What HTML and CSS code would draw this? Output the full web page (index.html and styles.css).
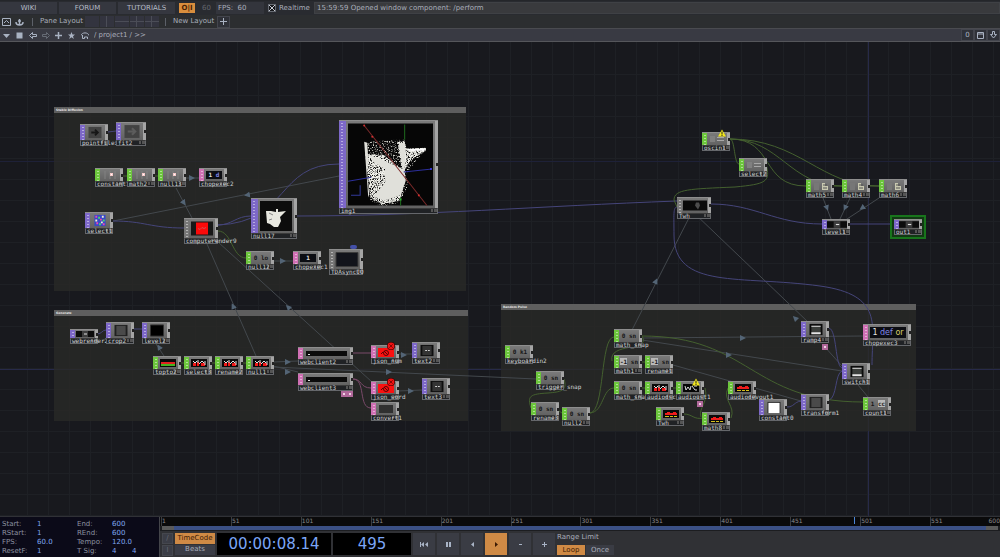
FILE: index.html
```html
<!DOCTYPE html>
<html lang="en">
<head>
<meta charset="utf-8">
<title>/project1</title>
<link rel="stylesheet" href="styles.css">
</head>
<body>
<svg class="defs" aria-hidden="true">
  <defs>
    <filter id="grain" x="0" y="0" width="1" height="1">
      <feTurbulence type="fractalNoise" baseFrequency="0.9" numOctaves="2" seed="4"/>
      <feColorMatrix values="0 0 0 0 0  0 0 0 0 0  0 0 0 0 0  0 5 0 0 -1.7"/>
      <feComposite in="SourceGraphic" operator="in"/>
    </filter>
    <filter id="dust" x="0" y="0" width="1" height="1">
      <feTurbulence type="fractalNoise" baseFrequency="0.8" numOctaves="2" seed="9"/>
      <feColorMatrix values="0 0 0 0 0  0 0 0 0 0  0 0 0 0 0  0 4 0 0 -2"/>
      <feComposite in="SourceGraphic" operator="in"/>
    </filter>
  </defs>
  <symbol id="t-plot" viewBox="0 0 18 10"><path d="M4 1v8M9 1v8M14 1v8" stroke="#828282" fill="none"/><path d="M9 3h3v3H9z" fill="#f5c9c9"/><path d="M10 4h1v1h-1z" fill="#fff"/></symbol>
  <symbol id="t-lines" viewBox="0 0 18 10"><path d="M2 2h5v6H2z" fill="#808080"/><path d="M9 3.5h7M9 6.5h7" stroke="#a8a8a8"/></symbol>
  <symbol id="t-cols" viewBox="0 0 18 10"><path d="M2 2h5v7H2z" fill="#777"/><path d="M10 2h3v3h3v4h-6z" fill="#c9c9b0"/><path d="M11 4h4M11 7h4" stroke="#555"/></symbol>
  <symbol id="t-words" viewBox="0 0 18 10"><path d="M1 1h16v8H1z" fill="#0a0a0a"/><path d="M3 5h3v3H3zM7 4h2v4H7zM11 5h4v3h-4z" fill="#f01818"/><path d="M3 3l2 2 2-2M8 2v3M9 6l3-3M12 3l2 2M15 3v4" stroke="#e0e0e0" fill="none"/></symbol>
  <symbol id="t-bars" viewBox="0 0 18 10"><path d="M1 1h16v8H1z" fill="#0a0a0a"/><path d="M3 4h2V3h3v1h3V3h3v1h1v2H3z" fill="#ee1c1c"/><path d="M3 7.5h4m1 0h3m1 0h3" stroke="#d8c01c"/></symbol>
  <symbol id="t-slab" viewBox="0 0 18 10"><path d="M1 1h16v8H1z" fill="#080808"/><path d="M2 5h14" stroke="#e02020" stroke-width="2"/><path d="M2 7h14" stroke="#45b020" stroke-width="2"/></symbol>
  <symbol id="t-fail" viewBox="0 0 18 10"><path d="M1 1h16v9H1z" fill="#fb1010"/><circle cx="9" cy="6" r="2.500" fill="none" stroke="#5a0505"/><path d="M7 4l4 4M4 7l2-2" fill="none" stroke="#5a0505"/></symbol>
  <symbol id="t-wide" viewBox="0 0 18 8"><path d="M0 1h18v6H0z" fill="#0c0c0c"/><path d="M6 1h6v6H6z" fill="#3e3e3e"/><path d="M8 4h3" stroke="#ddd"/></symbol>
  <symbol id="t-frame" viewBox="0 0 18 14"><path d="M2 1h14v12H2z" fill="#202020"/><path d="M4 2h10v10H4z" fill="#4a4a4a"/></symbol>
  <symbol id="t-text" viewBox="0 0 18 14"><path d="M2 1h14v12H2z" fill="#0e0e0e"/><path d="M4 2h10v10H4z" fill="#343434"/><path d="M7 7h2m1 0h2" stroke="#ddd"/></symbol>
  <symbol id="t-black" viewBox="0 0 18 14"><path d="M2 1h14v12H2z" fill="#000" stroke="#333"/></symbol>
  <symbol id="t-slot" viewBox="0 0 18 14"><path d="M2 1h14v12H2z" fill="#0b0b0b"/><path d="M4 3h10v9H4z" fill="#3c3f3c"/><path d="M4 3h10v1H4zM4 10h10v2H4z" fill="#e4e4e4"/></symbol>
  <symbol id="t-white" viewBox="0 0 18 14"><path d="M2 1h14v12H2z" fill="#252525"/><path d="M3 2h12v11H3z" fill="#fff"/></symbol>
  <symbol id="t-arrow" viewBox="0 0 18 14"><path d="M2 1h14v12H2z" fill="#424242"/><path d="M5 7h7M9 4l3 3-3 3" stroke="currentColor" stroke-width="2" fill="none"/></symbol>
  <symbol id="t-mono" viewBox="0 0 18 10"><path d="M2 1h14v8H2z" fill="#303030"/></symbol>
  <symbol id="warn" viewBox="0 0 8 7"><path d="M4 0l4 7H0z" fill="#f4e81c"/><path d="M4 2v3M4 5.5v1" stroke="#222"/></symbol>
  <symbol id="fault" viewBox="0 0 7 7"><circle cx="3.5" cy="3.5" r="3.500" fill="#2a0000"/><circle cx="3.500" cy="3.500" r="3" fill="#f01212"/><path d="M2 2l3 3M5 2L2 5" stroke="#500" stroke-width=".6"/></symbol>
  <symbol id="tri" viewBox="0 0 6 6"><path d="M0 0l6 3-6 3z"/></symbol>
</svg>

<header>
  <div class="bar bar-main">
    <button class="tab">WIKI</button>
    <button class="tab">FORUM</button>
    <button class="tab">TUTORIALS</button>
    <button class="power">O|I</button>
    <span class="dim">60</span>
    <span class="fps">FPS:&nbsp; 60</span>
    <label class="realtime"><input type="checkbox" checked> Realtime</label>
    <input class="log" aria-label="Status" readonly value="15:59:59 Opened window component: /perform">
  </div>
  <div class="bar bar-layout">
    <button class="icon" aria-label="Panes"><svg width="9" height="8" viewBox="0 0 9 8"><path d="M.5.5h8v7h-8zM2 5l2.500-2.500L7 5" fill="none" stroke="currentColor"/></svg></button>
    <button class="icon" aria-label="Anchor"><svg width="9" height="8" viewBox="0 0 9 8"><path d="M4.500 1v6M3 3h3M1 4c0 4 7 4 7 0" fill="none" stroke="currentColor" stroke-width="1.500"/></svg></button>
    <span class="rule"></span>
    <span class="caption">Pane Layout</span>
    <div class="layouts">
      <button aria-label="Single pane"></button>
      <button class="v1" aria-label="Two columns"></button>
      <button class="h1" aria-label="Two rows"></button>
      <button class="v1 h1" aria-label="Four panes"></button>
      <button class="v1 h1" aria-label="Split panes"></button>
    </div>
    <span class="rule"></span>
    <span class="caption">New Layout</span>
    <button class="icon boxed" aria-label="Add layout"><svg width="7" height="7" viewBox="0 0 7 7"><path d="M3.500 0v7M0 3.500h7" stroke="currentColor"/></svg></button>
  </div>
  <div class="bar bar-path">
    <button class="icon" aria-label="Menu"><svg width="7" height="7" viewBox="0 0 7 7"><path d="M0 2h7L3.500 6z" fill="currentColor"/></svg></button>
    <button class="icon" aria-label="Network"><svg width="7" height="7" viewBox="0 0 7 7"><path d="M.5.5h6v6h-6z" fill="currentColor"/></svg></button>
    <button class="icon" aria-label="Back"><svg width="8" height="7" viewBox="0 0 8 7"><path d="M.5 3.500l3-3v2h4v2h-4v2z" fill="none" stroke="currentColor"/></svg></button>
    <button class="icon faded" aria-label="Forward"><svg width="8" height="7" viewBox="0 0 8 7"><path d="M7.500 3.500l-3-3v2h-4v2h4v2z" fill="none" stroke="currentColor"/></svg></button>
    <button class="icon" aria-label="Add operator"><svg width="7" height="7" viewBox="0 0 7 7"><path d="M3.500 0v7M0 3.500h7" stroke="currentColor" stroke-width="1.500"/></svg></button>
    <button class="icon" aria-label="Bookmark"><svg width="7" height="7" viewBox="0 0 7 7"><path d="M3.500 0l1 2.500H7L5 4.200 5.800 7 3.500 5.300 1.200 7 2 4.200 0 2.500h2.500z" fill="currentColor"/></svg></button>
    <button class="icon" aria-label="Home"><svg width="8" height="7" viewBox="0 0 8 7"><path d="M0 3.500C1 0 7 0 8 3.500M1.500 3v3.500h2V5h3v2" fill="none" stroke="currentColor"/></svg></button>
    <input class="path" aria-label="Network path" value="/ project1 / &gt;&gt;">
    <button class="icon boxed">0</button>
    <button class="icon boxed" aria-label="Maximize"><svg width="7" height="7" viewBox="0 0 7 7"><path d="M.5.5h6v6h-6zM1 2h5" fill="none" stroke="currentColor"/></svg></button>
    <button class="icon boxed" aria-label="Pull down"><svg width="7" height="8" viewBox="0 0 7 8"><path d="M2.500.5h2v3h2l-3 3.500-3-3.500h2z" fill="none" stroke="currentColor"/></svg></button>
  </div>
</header>

<main class="network">
  <section class="group g-diffusion"><h2>Stable Diffusion</h2></section>
  <section class="group g-generate"><h2>Generate</h2></section>
  <section class="group g-pulse"><h2>Random Pulse</h2></section>

  <svg class="wires" aria-hidden="true">
    <g transform="translate(0 -42)">
      <g class="link">
        <path d="M176 188L192 218M207 244L256 356M113 221L339 176M218 242L372 382"/>
        <path d="M186 178h13M274 261h19M156 344l8 12M273 362l25-1M273 366l25 6M273 367L536 379M398 354h14M398 391l24-1"/>
        <path d="M692 212L632 330M693 212L808 322M823 198l8 21M850 198l-10 21M879 198l-32 21"/>
        <path d="M642 338L863 336M642 340L842 371M673 365L801 401M824 346l18 20M858 385l10 12"/>
      </g>
      <g class="wire-top">
        <path d="M108 132l8-1M113 221C145 221 150 228 184 228M218 225C232 225 236 216 251 216M218 225C290 222 276 164 339 164"/>
        <path d="M297 216C420 216 540 206 677 201M97 334C102 334 102 330 106 330M132 329h10"/>
        <path d="M711 204C755 204 775 224 822 224M849 224h45"/>
        <path d="M677 207C673 207 674 215 674 235C674 290 740 275 820 286C884 295 872 325 872 365"/>
        <path d="M829 328C837 330 835 366 842 368M829 400C837 398 835 373 842 371M787 407C794 407 794 402 801 401"/>
      </g>
      <g class="wire-chop">
        <path d="M122 176h5M154 176h5M218 231C232 231 232 258 246 258M180 363h4M211 363h4M242 363h4"/>
        <path d="M730 139C735 139 734 164 739 164M730 139C775 139 760 186 806 186M730 139C780 139 790 186 842 186M730 139C800 139 820 186 879 186M834 186h8M870 186h9"/>
        <path d="M766 164C771 182 766 184 735 187C690 189 674 189 674 200L677 207"/>
        <path d="M564 379C568 391 560 392 548 393C530 394 527 396 531 408M559 411l3 2M590 413C605 412 600 337 614 337M590 413C604 412 602 388 614 388"/>
        <path d="M642 336C652 352 608 342 612 361M642 362h3M642 388h3M673 388h4M642 336C750 336 750 402 863 402"/>
        <path d="M705 388C709 402 698 408 701 417M684 414C692 414 694 420 703 418M731 418C736 406 722 400 728 388"/>
      </g>
      <g class="wire-dat">
        <path d="M353 353h18M353 379C362 379 360 388 371 388M353 379C366 379 358 408 371 408"/>
      </g>
      <g class="heads">
        <use href="#tri" x="189" y="175" width="6" height="6"/>
        <use href="#tri" x="181" y="200" width="6" height="6" transform="rotate(55 184 203)"/>
        <use href="#tri" x="244" y="192" width="6" height="6" transform="rotate(170 247 195)"/>
        <use href="#tri" x="280" y="258" width="6" height="6"/>
        <use href="#tri" x="230" y="303" width="6" height="6" transform="rotate(-115 233 306)"/>
        <use href="#tri" x="285" y="304" width="6" height="6" transform="rotate(-135 288 307)"/>
        <use href="#tri" x="156" y="344" width="6" height="6" transform="rotate(-120 159 347)"/>
        <use href="#tri" x="285" y="359" width="6" height="6"/>
        <use href="#tri" x="285" y="369" width="6" height="6"/>
        <use href="#tri" x="386" y="369" width="6" height="6"/>
        <use href="#tri" x="401" y="352" width="6" height="6"/>
        <use href="#tri" x="408" y="388" width="6" height="6"/>
        <use href="#tri" x="653" y="278" width="6" height="6" transform="rotate(-65 656 281)"/>
        <use href="#tri" x="792" y="315" width="6" height="6" transform="rotate(-135 795 318)"/>
        <use href="#tri" x="740" y="335" width="6" height="6"/>
        <use href="#tri" x="726" y="352" width="6" height="6"/>
        <use href="#tri" x="824" y="205" width="6" height="6" transform="rotate(70 827 208)"/>
        <use href="#tri" x="842" y="205" width="6" height="6" transform="rotate(115 845 208)"/>
        <use href="#tri" x="859" y="205" width="6" height="6" transform="rotate(145 862 208)"/>
      </g>
    </g>
  </svg>

  <div class="node top mid n-pointfilein"><div class="face"><svg class="fill"><use href="#t-arrow"/></svg></div><p>pointfilein</p></div>
  <div class="node top big n-fit2"><div class="face"><svg class="fill soft"><use href="#t-arrow"/></svg></div><p>fit2</p></div>
  <div class="node chop n-constant1"><div class="face"><svg class="fill"><use href="#t-plot"/></svg></div><p>constant1</p></div>
  <div class="node chop n-math2"><div class="face"><svg class="fill"><use href="#t-plot"/></svg></div><p>math2</p></div>
  <div class="node chop n-null13"><div class="face"><svg class="fill"><use href="#t-plot"/></svg></div><p>null13</p></div>
  <div class="node dat n-chopexec2"><div class="face"><span class="code">1 <i>d</i></span></div><p>chopexec2</p></div>
  <div class="node top mid n-select1"><div class="face"><svg class="fill" viewBox="0 0 18 14"><path d="M3 1h12v12H3z" fill="#3848c8"/><path d="M4 2h2v2H4zM9 5h2v2H9zM5 9h2v2H5zM12 10h2v2h-2z" fill="#e848b0"/><path d="M7 3h2v2H7zM12 6h2v2h-2zM8 10h2v2H8z" fill="#48d868"/><path d="M11 2h2v2h-2zM4 6h2v2H4zM10 8h2v2h-2z" fill="#f0f0d0"/></svg></div><p>select1</p></div>
  <div class="node comp n-render9"><div class="face"><svg class="fill" viewBox="0 0 24 16"><path d="M1 1h22v14H1z" fill="#171717"/><path d="M6 2h12v12H6z" fill="#fb0a0a"/><path d="M8 8l2 1 2-2 2 1 2-1" fill="none" stroke="#d05050"/></svg></div><p>computerender9</p></div>
  <div class="node top n-null17"><div class="face"><svg class="fill" viewBox="0 0 32 30"><path d="M0 0h32v30H0z" fill="#0c0c0c"/><path d="M6 10h5l5 1V8h2v3l8-1-6 6 1 4-3 6-4 0-4-3-3-1z" fill="#e8e8e0"/><path d="M9 12l4 2M9 19l3-1" stroke="#888"/></svg></div><p>null17</p></div>
  <div class="node top n-img1"><div class="face"><svg class="fill" viewBox="0 0 84 81">
    <path d="M0 0h84v81H0z" fill="#060606"/>
    <path d="M17 18l31-2 8 0 2 9h19l-14 18-6 7 3 10-8 18-18 4-12-6z" fill="#d8d8d0" filter="url(#dust)"/>
    <path d="M17 30l18 1 18 14-4-27h7l2 7 19-1v3l-15 9-8 13 3 7-6 20-17 4-12-7-2-17z" fill="#f0f0ea" filter="url(#grain)"/>
    <path d="M16 18l3 1 1 16-1 15 2 20-1 3zM20 30l34 15-4-26h6l1 6-1 22 1 9-5 15-16 5-11-4 12-14-1-10 1-3-12-7z" fill="#e0e0da"/>
    <path d="M58 25h18v2H60z" fill="#fff"/>
    <path d="M16 2l62 79" stroke="#7c2a2a" fill="none"/>
    <path d="M56 1v15M52 73v8" stroke="#1f6b1f"/>
    <path d="M0 57l23-4M55 48l28-3" stroke="#2c2f9a"/>
    <path d="M12 61v10H3" stroke="#333a9a" fill="none"/>
    <g fill="#d03030"><circle cx="16" cy="2" r="1"/><circle cx="24" cy="13" r="1"/><circle cx="70" cy="71" r="1"/></g>
    <circle cx="82" cy="45" r="1" fill="#4040f0"/><circle cx="52" cy="75" r="1" fill="#30c030"/>
  </svg></div><p>img1</p></div>
  <div class="node chop n-null12"><div class="face"><span class="val">0 lo</span></div><p>null12</p></div>
  <div class="node dat n-chopexec1"><div class="face"><span class="code">1</span></div><p>chopexec1</p></div>
  <div class="node comp n-async"><div class="face"><svg class="fill" viewBox="0 0 24 16"><path d="M1 1h22v14H1z" fill="#12141b" stroke="#3c3c3c"/></svg></div><p>TDAsyncIO</p></div>
  <span class="chip n-asyncflag"></span>

  <div class="node top n-webrender2"><div class="face"><svg class="fill"><use href="#t-wide"/></svg></div><p>webrender2</p></div>
  <div class="node top mid n-crop2"><div class="face"><svg class="fill"><use href="#t-frame"/></svg></div><p>crop2</p></div>
  <div class="node top mid n-level2"><div class="face"><svg class="fill"><use href="#t-black"/></svg></div><p>level2</p></div>
  <div class="node chop n-topto2"><div class="face"><svg class="fill"><use href="#t-slab"/></svg></div><p>topto2</p></div>
  <div class="node chop n-select3"><div class="face"><svg class="fill"><use href="#t-words"/></svg></div><p>select3</p></div>
  <div class="node chop n-rename2"><div class="face"><svg class="fill"><use href="#t-words"/></svg></div><p>rename2</p></div>
  <div class="node chop n-null1"><div class="face"><svg class="fill"><use href="#t-words"/></svg></div><p>null1</p></div>
  <div class="node dat long n-webclient2"><div class="face"><span class="console"></span></div><p>webclient2</p></div>
  <div class="node dat long n-webclient3"><div class="face"><span class="console"></span></div><p>webclient3</p></div>
  <span class="dock n-dock1"></span><span class="dock n-dock2"></span>
  <div class="node dat n-jsonnum"><div class="face"><svg class="fill"><use href="#t-fail"/></svg></div><p>json_num</p><svg class="badge"><use href="#fault"/></svg></div>
  <div class="node top mid n-text2"><div class="face"><svg class="fill"><use href="#t-text"/></svg></div><p>text2</p></div>
  <div class="node dat n-jsonword"><div class="face"><svg class="fill"><use href="#t-fail"/></svg></div><p>json_word</p><svg class="badge"><use href="#fault"/></svg></div>
  <div class="node top mid n-text3"><div class="face"><svg class="fill"><use href="#t-text"/></svg></div><p>text3</p></div>
  <div class="node dat n-convert1"><div class="face"><svg class="fill"><use href="#t-mono"/></svg></div><p>convert1</p></div>

  <div class="node chop n-oscin1"><div class="face"><svg class="fill"><use href="#t-lines"/></svg></div><p>oscin1</p><svg class="badge"><use href="#warn"/></svg></div>
  <div class="node chop n-select2"><div class="face"><svg class="fill"><use href="#t-lines"/></svg></div><p>select2</p></div>
  <div class="node chop n-math5"><div class="face"><svg class="fill"><use href="#t-cols"/></svg></div><p>math5</p></div>
  <div class="node chop n-math4"><div class="face"><svg class="fill"><use href="#t-cols"/></svg></div><p>math4</p></div>
  <div class="node chop n-math6"><div class="face"><svg class="fill"><use href="#t-cols"/></svg></div><p>math6</p></div>
  <div class="node comp n-twh"><div class="face"><svg class="fill" viewBox="0 0 24 12"><path d="M0 1h24v10H0z" fill="#0a0a0a"/><path d="M13 3h3l1 3-2 4-3-4z" fill="#4c4c4c"/></svg></div><p>Twh</p></div>
  <div class="node top flat n-level1"><div class="face"><svg class="fill"><use href="#t-wide"/></svg></div><p>level1</p></div>
  <div class="node top flat display n-out1"><div class="face"><svg class="fill"><use href="#t-wide"/></svg></div><p>out1</p></div>

  <div class="node chop n-keyboardin2"><div class="face"><span class="val">0 k1</span></div><p>keyboardin2</p></div>
  <div class="node chop n-trigger"><div class="face"><span class="val">0 sn</span></div><p>trigger_snap</p></div>
  <div class="node chop n-rename3"><div class="face"><span class="val">0 sn</span></div><p>rename3</p></div>
  <div class="node chop n-null2"><div class="face"><span class="val">0 sn</span></div><p>null2</p></div>
  <div class="node chop n-mathsnap"><div class="face"><span class="val">0 sn</span></div><p>math_snap</p></div>
  <div class="node chop n-math1"><div class="face"><span class="val"><b>-1</b> sn</span></div><p>math1</p></div>
  <div class="node chop n-rename1"><div class="face"><span class="val"><b>-1</b> sn</span></div><p>rename1</p></div>
  <div class="node chop n-mathsnap2"><div class="face"><span class="val">0 sn</span></div><p>math_snap</p></div>
  <div class="node chop n-audiodsc"><div class="face"><svg class="fill"><use href="#t-words"/></svg></div><p>audiodsc</p></div>
  <div class="node chop n-audioust"><div class="face"><svg class="fill" viewBox="0 0 18 10"><path d="M1 1h16v8H1z" fill="#060606"/><path d="M3 3l1 4 2-3 2 3 1-4M10 3l3 4M12 3h3M13 7h2" stroke="#d8d8d8" fill="none"/></svg></div><p>audioust1</p><svg class="badge"><use href="#warn"/></svg></div>
  <span class="dock n-dock3"></span>
  <div class="node chop n-twh2"><div class="face"><svg class="fill"><use href="#t-bars"/></svg></div><p>Twh</p></div>
  <div class="node chop n-math8"><div class="face"><svg class="fill"><use href="#t-bars"/></svg></div><p>math8</p></div>
  <div class="node chop n-audioout"><div class="face"><svg class="fill"><use href="#t-bars"/></svg></div><p>audiodevout1</p></div>
  <div class="node top mid n-constant0"><div class="face"><svg class="fill"><use href="#t-white"/></svg></div><p>constant0</p></div>
  <div class="node top mid n-transform1"><div class="face"><svg class="fill"><use href="#t-frame"/></svg></div><p>transform1</p></div>
  <div class="node top mid n-ramp4"><div class="face"><svg class="fill"><use href="#t-slot"/></svg></div><p>ramp4</p></div>
  <span class="dock n-dock4"></span>
  <div class="node top mid n-switch1"><div class="face"><svg class="fill"><use href="#t-slot"/></svg></div><p>switch1</p></div>
  <div class="node dat n-chopexec3"><div class="face"><span class="code wide">1 <i>def</i> <em>or</em></span></div><p>chopexec3</p></div>
  <div class="node chop n-count1"><div class="face"><span class="val">1 <b>cc</b></span></div><p>count1</p></div>
</main>

<footer>
  <form class="fields">
    <label>Start:<input value="1"></label>
    <label>End:<input value="600"></label>
    <label>RStart:<input value="1"></label>
    <label>REnd:<input value="600"></label>
    <label>FPS:<input value="60.0"></label>
    <label>Tempo:<input value="120.0"></label>
    <label>ResetF:<input value="1"></label>
    <div class="pair"><label>T Sig:<input value="4"></label><input aria-label="Signature unit" value="4"></div>
  </form>
  <div class="timeline">
    <div class="ruler">
      <span>1</span><span>51</span><span>101</span><span>151</span><span>201</span><span>251</span><span>301</span><span>351</span><span>401</span><span>451</span><span>501</span><span class="last">551<b>600</b></span>
      <i class="playhead"></i>
    </div>
    <div class="range"><i></i></div>
    <div class="transport">
      <div class="stack modes"><button>/</button><button>I</button></div>
      <div class="stack units"><button class="on">TimeCode</button><button>Beats</button></div>
      <output class="clock">00:00:08.14</output>
      <output class="frame">495</output>
      <div class="keys">
        <button aria-label="Rewind"><svg width="8" height="7" viewBox="0 0 8 7"><path d="M0 1h1v5H0zM4 1v5L1 3.500zM8 1v5L5 3.500z" fill="currentColor"/></svg></button>
        <button aria-label="Pause"><svg width="5" height="7" viewBox="0 0 5 7"><path d="M0 1h2v5H0zM3 1h2v5H3z" fill="currentColor"/></svg></button>
        <button aria-label="Play backward"><svg width="5" height="7" viewBox="0 0 5 7"><path d="M4 1v5L1 3.500z" fill="currentColor"/></svg></button>
        <button class="on" aria-label="Play"><svg width="5" height="7" viewBox="0 0 5 7"><path d="M1 1v5l3-2.500z" fill="currentColor"/></svg></button>
        <button aria-label="Step back"><svg width="5" height="7" viewBox="0 0 5 7"><path d="M1 3.500h3" stroke="currentColor"/></svg></button>
        <button aria-label="Step forward"><svg width="7" height="7" viewBox="0 0 7 7"><path d="M3.500 1v5M1 3.500h5" stroke="currentColor"/></svg></button>
      </div>
      <div class="limit">
        <span>Range Limit</span>
        <div class="choice"><button class="on">Loop</button><button>Once</button></div>
      </div>
    </div>
  </div>
</footer>
</body>
</html>
```

FILE: styles.css
```css
* { box-sizing: border-box; }

body {
  margin: 0;
  min-height: 100vh;
  display: flex;
  flex-direction: column;
  background: #18191e;
  color: #a9aebb;
  font: 7px/9px "DejaVu Sans", Verdana, sans-serif;
}

button, input, output {
  font: inherit;
  color: inherit;
}

button {
  display: grid;
  place-items: center;
  margin: 0;
  padding: 0;
  border: 0;
  background: none;
}

input {
  min-width: 0;
  margin: 0;
  padding: 0;
  border: 0;
  outline: 0;
  background: none;
}

.defs { position: absolute; width: 0; height: 0; }

/* Top bars */
.bar { display: flex; align-items: stretch; }

.bar-main {
  height: 15px;
  padding: 1px 0;
  gap: 2px;
  border-top: 1px solid #24262a;
  background: #292b30;
}

.tab { width: 57px; background: #35373f; color: #b6bbc6; }

.power {
  width: 16px;
  margin: 1px 2px;
  background: #d98e3d;
  color: #4a2205;
  font-weight: bold;
}

.dim { width: 15px; color: #63666d; text-align: center; align-self: center; }
.fps { width: 48px; padding: 2px; background: #33353c; }

.realtime { display: flex; align-items: center; gap: 3px; width: 46px; padding: 0 2px; }

.realtime input {
  appearance: none;
  width: 8px;
  height: 8px;
  border: 1px solid #666a72;
  background:
    linear-gradient(45deg, transparent 42%, #c8ccd4 42% 58%, transparent 58%),
    linear-gradient(-45deg, #17181b 42%, #c8ccd4 42% 58%, #17181b 58%);
}

.log { flex: 1; padding: 0 2px; background: #393a3d; border: 1px solid #3f4145; }

.bar-layout {
  height: 13px;
  align-items: center;
  background: #2c2e30;
}

.icon { width: 13px; height: 12px; color: #a9b2c2; }
.icon.boxed { border: 1px solid #43454d; background: #2f3138; }
.icon.faded { color: #666b75; }
.rule { width: 1px; height: 8px; margin: 0 6px; background: #5c6068; }
.caption { margin: 0 1px; }
.caption + .icon { margin-left: 2px; }

.layouts { display: flex; gap: 1px; margin-left: 1px; }
.layouts button { width: 14px; height: 11px; background: #33343f; }
.layouts .v1 { background: linear-gradient(90deg, #33343f 6px, #4b4d57 6px 7px, #33343f 7px); }
.layouts .h1 { background: linear-gradient(#33343f 5px, #4b4d57 5px 6px, #33343f 6px); }

.layouts .v1.h1 {
  background:
    linear-gradient(90deg, transparent 6px, #4b4d57 6px 7px, transparent 7px),
    linear-gradient(#33343f 5px, #4b4d57 5px 6px, #33343f 6px);
}

.bar-path {
  height: 14px;
  align-items: center;
  border-top: 1px solid #4a4b50;
  border-bottom: 1px solid #55565b;
  background: #393a43;
}

.path { flex: 1; padding-left: 3px; }

/* Network canvas */
.network {
  position: relative;
  flex: 1;
  overflow: hidden;
  background:
    linear-gradient(#272a49, #272a49) 868px 0 / 1px 100% no-repeat,
    linear-gradient(#272a49, #272a49) 0 327px / 100% 1px no-repeat,
    linear-gradient(#1e2138, #1e2138) 0 119px / 100% 1px no-repeat,
    repeating-linear-gradient(90deg, transparent 0 20px, #1e2025 20px 21px) 7px 0,
    repeating-linear-gradient(transparent 0 20px, #1e2025 20px 21px) 0 12px,
    #18191e;
}

.group { position: absolute; background: rgba(42, 42, 40, .76); }

.group h2 {
  margin: 0;
  padding: 0 2px;
  height: 6px;
  background: #5e5e5e;
  color: #e4e4e4;
  font: bold 3px/6px "DejaVu Sans", sans-serif;
}

.g-diffusion { left: 54px; top: 65px; width: 412px; height: 184px; }
.g-generate { left: 54px; top: 268px; width: 414px; height: 111px; }
.g-pulse { left: 501px; top: 262px; width: 415px; height: 127px; }

.wires { position: absolute; left: 0; top: 0; width: 100%; height: 100%; }
.wires path { fill: none; }
.link > path { stroke: #43484d; }
.wire-top > path { stroke: #45457a; }
.wire-chop > path { stroke: #44602f; }
.wire-dat > path { stroke: #7a4a6a; }
#tri path { fill: #536475; }

/* Operators */
.node {
  --kind: #7d68c8;
  position: absolute;
  display: flex;
  flex-direction: column;
  width: 28px;
  height: 19px;
}

.chop { --kind: #6cc63c; }
.dat { --kind: #d070b4; }
.comp { --kind: #777; width: 34px; height: 26px; }
.mid { height: 22px; }
.big { width: 30px; height: 24px; }
.flat { height: 16px; }
.long { width: 55px; height: 18px; }

.face {
  flex: 1;
  min-height: 0;
  display: flex;
  justify-content: center;
  align-items: center;
  border-top: 1px solid #8e8e8e;
  background: linear-gradient(#7a7a7a, #626262);
}

.face::before {
  content: "";
  align-self: stretch;
  flex: 0 0 5px;
  background:
    repeating-linear-gradient(transparent 0 2px, rgba(255, 255, 255, .45) 2px 3px) 2px 0 / 2px 100% no-repeat,
    var(--kind);
}

.face::after {
  content: "";
  align-self: stretch;
  flex: 0 0 3px;
  background:
    linear-gradient(#222, #222) 1px 50% / 2px 3px no-repeat,
    #a5a5a5;
}

.fill { flex: 1; min-width: 0; height: 100%; padding: 1px; color: #161616; }
.flat .fill, .n-webrender2 .fill { padding: 0; }
.soft { color: #5c5c5c; }

.node p {
  flex: 0 0 6px;
  margin: 0;
  padding-left: 1px;
  border: 1px solid #65676b;
  border-top-color: #3a3a3a;
  background:
    linear-gradient(90deg, #555 2px, transparent 2px 3px, #555 3px 5px) 100% 0 / 6px 3px no-repeat,
    #202225;
  color: #d0d2d4;
  font: 6px/4px "DejaVu Sans Mono", monospace;
  white-space: nowrap;
}

.val, .code {
  flex: 1;
  color: #161616;
  font: bold 6px/8px "DejaVu Sans Mono", monospace;
  text-align: center;
  white-space: nowrap;
}

.val b { background: #b9b9b9; }

.code {
  margin: 2px;
  background: #0c0d12;
  color: #e0e0e0;
}

.code i { color: #8088e8; font-style: normal; }
.code em { color: #d8cf6a; font-style: normal; }
.code.wide { font: 8px/11px "DejaVu Sans", sans-serif; overflow: hidden; }

.console {
  flex: 1;
  height: 5px;
  margin: 0 3px;
  background: linear-gradient(#ddd, #ddd) 2px 3px / 2px 1px no-repeat, #0b0b0b;
}

.badge { position: absolute; right: 4px; top: -3px; width: 8px; height: 8px; }
.dock { position: absolute; width: 6px; height: 6px; border: 2px solid #b0689a; background: #f0d0e4; }
.chip { position: absolute; width: 7px; height: 4px; border-radius: 2px; background: #4450a8; }
.display { outline: 2px solid #18751c; outline-offset: 2px; background: #123814; box-shadow: 0 0 0 3px #123814; }

.n-pointfilein { left: 80px; top: 82px; }
.n-fit2 { left: 116px; top: 80px; }
.n-constant1 { left: 95px; top: 126px; }
.n-math2 { left: 127px; top: 126px; }
.n-null13 { left: 158px; top: 126px; }
.n-chopexec2 { left: 199px; top: 126px; }
.n-select1 { left: 85px; top: 170px; }
.n-render9 { left: 184px; top: 176px; }
.n-null17 { left: 251px; top: 156px; width: 46px; height: 41px; }
.n-img1 { left: 339px; top: 78px; width: 99px; height: 94px; }
.n-null12 { left: 246px; top: 209px; }
.n-chopexec1 { left: 293px; top: 209px; }
.n-async { left: 329px; top: 207px; }
.n-asyncflag { left: 350px; top: 203px; }
.n-webrender2 { left: 70px; top: 287px; height: 15px; }
.n-crop2 { left: 106px; top: 280px; }
.n-level2 { left: 142px; top: 280px; }
.n-topto2 { left: 153px; top: 314px; }
.n-select3 { left: 184px; top: 314px; }
.n-rename2 { left: 215px; top: 314px; }
.n-null1 { left: 246px; top: 314px; }
.n-webclient2 { left: 298px; top: 305px; }
.n-webclient3 { left: 298px; top: 331px; }
.n-dock1 { left: 341px; top: 349px; }
.n-dock2 { left: 347px; top: 349px; }
.n-jsonnum { left: 371px; top: 303px; }
.n-text2 { left: 412px; top: 300px; }
.n-jsonword { left: 371px; top: 339px; }
.n-text3 { left: 422px; top: 336px; }
.n-convert1 { left: 371px; top: 360px; }
.n-oscin1 { left: 702px; top: 90px; }
.n-select2 { left: 739px; top: 116px; }
.n-math5 { left: 806px; top: 137px; }
.n-math4 { left: 842px; top: 137px; }
.n-math6 { left: 879px; top: 137px; }
.n-twh { left: 677px; top: 155px; height: 22px; }
.n-level1 { left: 822px; top: 177px; }
.n-out1 { left: 894px; top: 177px; }
.n-keyboardin2 { left: 505px; top: 303px; }
.n-trigger { left: 536px; top: 329px; }
.n-rename3 { left: 531px; top: 360px; }
.n-null2 { left: 562px; top: 365px; }
.n-mathsnap { left: 614px; top: 287px; }
.n-math1 { left: 614px; top: 313px; }
.n-rename1 { left: 645px; top: 313px; }
.n-mathsnap2 { left: 614px; top: 339px; }
.n-audiodsc { left: 645px; top: 339px; }
.n-audioust { left: 676px; top: 339px; }
.n-dock3 { left: 697px; top: 359px; }
.n-twh2 { left: 656px; top: 365px; }
.n-math8 { left: 702px; top: 370px; }
.n-audioout { left: 728px; top: 339px; }
.n-constant0 { left: 759px; top: 357px; }
.n-transform1 { left: 801px; top: 352px; }
.n-ramp4 { left: 801px; top: 279px; }
.n-dock4 { left: 822px; top: 302px; }
.n-switch1 { left: 842px; top: 321px; }
.n-chopexec3 { left: 863px; top: 282px; width: 48px; height: 22px; }
.n-count1 { left: 863px; top: 355px; }

.n-img1 .face::before, .n-null17 .face::before { flex-basis: 7px; }
.n-img1 .fill, .n-null17 .fill { padding: 2px; }

/* Timeline footer */
footer {
  display: flex;
  border-top: 1px solid #303136;
  background: #303135;
}

.fields {
  flex: 0 0 160px;
  display: grid;
  grid-template-columns: 75px 1fr;
  align-content: center;
  padding: 2px 0 0 2px;
  border-right: 1px solid #44454a;
  background: #0b0a18;
  color: #8d92a0;
}

.fields label { display: grid; grid-template-columns: 35px 1fr; }
.fields input { width: 100%; height: 9px; color: #7ea6f0; }
.pair { display: grid; grid-template-columns: 55px 1fr; }

.timeline { flex: 1; min-width: 0; }

.ruler {
  position: relative;
  display: grid;
  grid-template-columns: repeat(12, 1fr);
  height: 9px;
  padding-left: 1px;
  background: #0a0a0b;
  color: #8b8b8b;
  font: 6px/8px "DejaVu Sans", sans-serif;
}

.ruler span { border-left: 1px solid #3c3c3c; }
.ruler .last { display: flex; justify-content: space-between; }
.ruler b { font-weight: normal; }

.playhead {
  position: absolute;
  left: 82.6%;
  top: 0;
  width: 1px;
  height: 7px;
  background: #4c86d8;
}

.range { padding: 0 2px; height: 5px; background: #1c1d20; }

.range i {
  display: block;
  height: 4px;
  border: solid #5a5a5a;
  border-width: 0 12px;
  background: #3b5084;
}

.transport { display: flex; padding: 2px; gap: 2px; height: 26px; }
.stack { display: grid; grid-template-rows: 1fr 1fr; gap: 1px; }
.stack button { background: #3b3d46; }
.modes { width: 11px; }
.modes button { color: #666a74; border: 1px solid #45474e; }
.units { width: 40px; }
.transport .on { background: #cf8a45; color: #3c1a04; }

.clock, .frame {
  display: grid;
  place-items: center;
  background: #000;
  color: #7ba6f7;
  font-size: 15px;
  line-height: 22px;
}

.clock { width: 114px; }
.frame { width: 78px; }
.keys { display: flex; gap: 2px; }
.keys button { width: 22px; background: #3a3c44; color: #a9b4c6; }
.limit { display: flex; flex-direction: column; justify-content: space-between; }
.choice { display: flex; gap: 1px; }
.choice button { width: 28px; height: 10px; background: #3a3c44; }
```
